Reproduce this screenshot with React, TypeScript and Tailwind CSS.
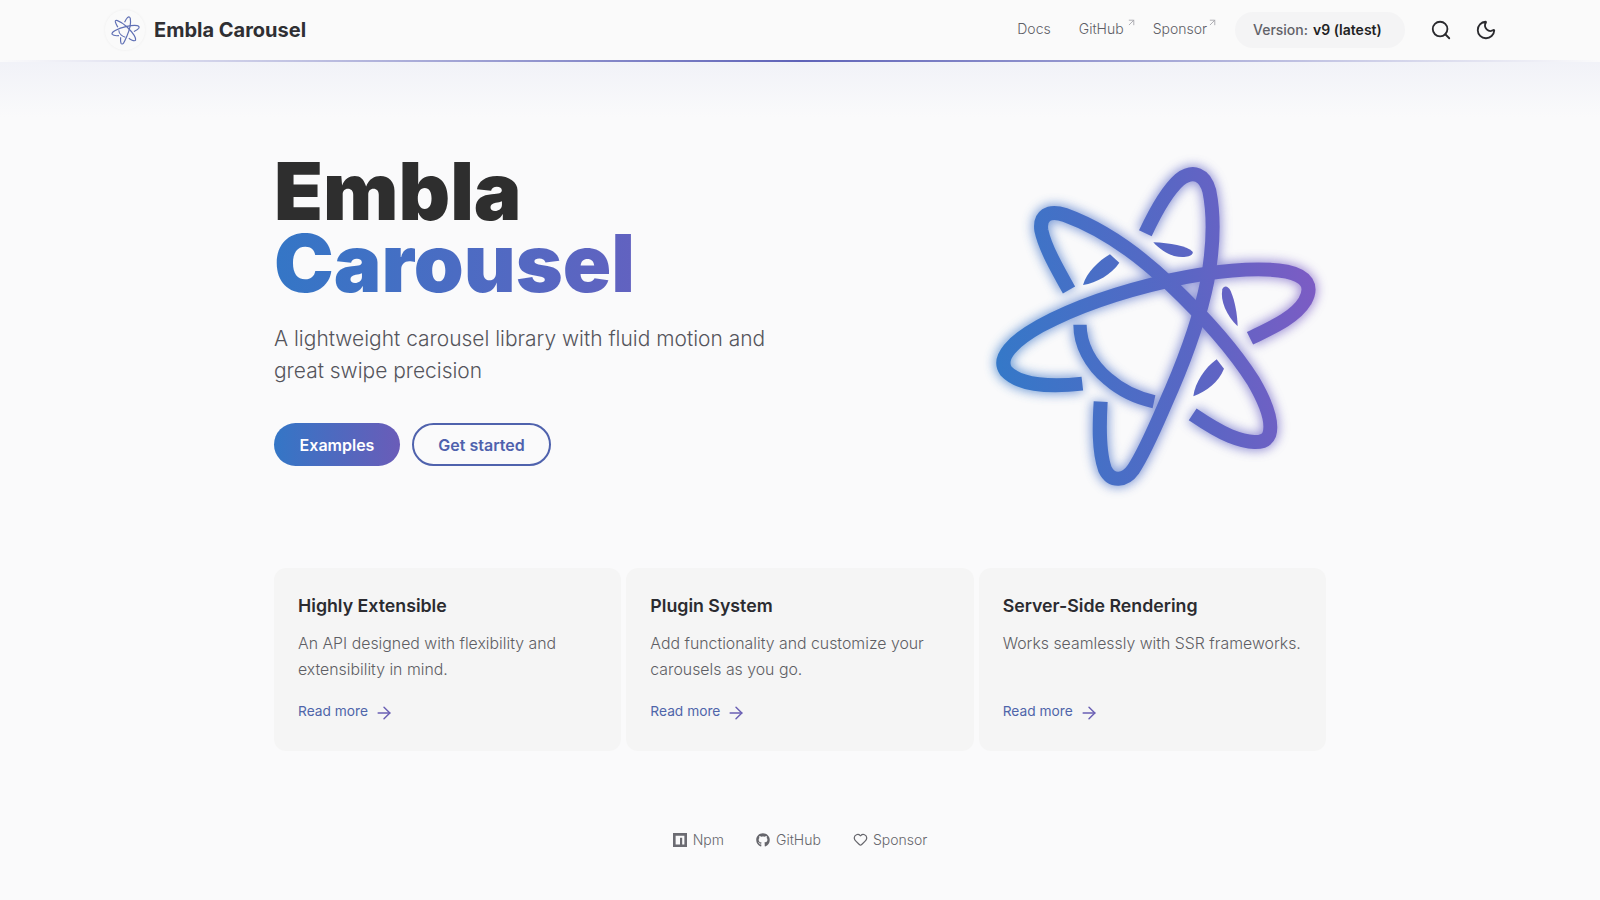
import React from "react";
import { ArrowRight, ArrowUpRight, Heart, Moon, Search } from "lucide-react";
import { FaGithub } from "react-icons/fa";

// strokes of the three orbits, drawn in a 1080 box
const orbits = [
  "M337 728 C250 738 150 735 108 690 C80 650 130 600 210 555 C330 490 480 445 600 418 C720 392 860 375 950 392 C1010 405 1030 435 1005 480 C975 530 905 560 840 592",
  "M297 447 C262 385 225 320 214 268 C208 225 235 205 285 222 C390 260 500 335 600 430 C700 525 790 625 850 720 C885 780 910 840 898 880 C885 915 830 905 780 885 C740 868 705 845 668 820",
  "M526 277 C555 215 590 150 630 115 C670 85 705 100 718 150 C735 235 730 320 712 420 C690 530 650 640 605 745 C565 835 530 925 490 985 C465 1020 425 1025 405 985 C385 930 388 850 392 782",
];
const inner = "M330 551 C330 610 360 670 415 715 C455 750 505 772 552 782";
const lenses = [
  "M550 304 C600 306 650 315 668 332 C672 347 640 352 612 345 C590 338 565 322 550 304 Z",
  "M339 432 C350 395 385 360 420 340 L448 365 C425 400 380 425 339 432 Z",
  "M803 556 C770 525 750 480 757 445 C762 432 775 435 782 450 C795 480 802 520 803 556 Z",
  "M670 766 C675 725 705 680 740 655 L762 683 C745 725 710 750 670 766 Z",
];

const Logo = ({ className }: { className?: string }) => (
  <svg viewBox="0 0 1080 1080" className={className} aria-hidden>
    <defs>
      <linearGradient id="logoGrad" gradientUnits="userSpaceOnUse" x1="80" y1="600" x2="1040" y2="480">
        <stop offset="0" stopColor="#3578c8" />
        <stop offset="0.6" stopColor="#5a66c4" />
        <stop offset="1" stopColor="#7c5cc4" />
      </linearGradient>
      <filter id="logoGlow" x="-20%" y="-20%" width="140%" height="140%">
        <feGaussianBlur stdDeviation="16" />
      </filter>
    </defs>
    <g filter="url(#logoGlow)" opacity="0.7">
      {orbits.map((d) => (
        <path key={d} d={d} fill="none" stroke="url(#logoGrad)" strokeWidth="52" />
      ))}
      <path d={inner} fill="none" stroke="url(#logoGrad)" strokeWidth="50" />
    </g>
    {orbits.map((d) => (
      <path key={d} d={d} fill="none" stroke="url(#logoGrad)" strokeWidth="42" />
    ))}
    <path d={inner} fill="none" stroke="url(#logoGrad)" strokeWidth="40" />
    {lenses.map((d) => (
      <path key={d} d={d} fill="url(#logoGrad)" />
    ))}
  </svg>
);

const MiniLogo = () => (
  <svg viewBox="0 0 1080 1080" className="h-[32px] w-[32px]" aria-hidden>
    {orbits.map((d) => (
      <path key={d} d={d} fill="none" stroke="#5f6fb4" strokeWidth="40" />
    ))}
    <path d={inner} fill="none" stroke="#5f6fb4" strokeWidth="36" />
  </svg>
);

const NpmIcon = () => (
  <svg viewBox="0 0 16 16" className="h-[14px] w-[14px]" aria-hidden>
    <path d="M0 0h16v16H0z M3 3v10h5V5.5h2.5V13H13V3z" fillRule="evenodd" fill="#6b6b72" />
  </svg>
);

const cards = [
  { title: "Highly Extensible", text: "An API designed with flexibility and extensibility in mind." },
  { title: "Plugin System", text: "Add functionality and customize your carousels as you go." },
  { title: "Server-Side Rendering", text: "Works seamlessly with SSR frameworks." },
];

export default function App() {
  return (
    <div className="min-h-[900px] overflow-hidden bg-[#fafafb] font-['Inter',sans-serif] text-[#2e2e33]">
      <header className="flex h-[60px] items-center justify-between bg-[#fafafa] pl-[105px] pr-[103px]">
        <a className="flex items-center gap-[9px]">
          <span className="flex h-[40px] w-[40px] items-center justify-center rounded-full shadow-[0_0_3px_rgba(0,0,0,0.06)]">
            <MiniLogo />
          </span>
          <span className="text-[20px] font-bold text-[#2f2f33]">Embla Carousel</span>
        </a>
        <nav className="flex items-center text-[14px] font-light text-[#5e5e66]">
          <a className="mr-[28px] pb-[3px]">Docs</a>
          <a className="relative mr-[17px] pb-[3px] pr-[12px]">
            GitHub
            <ArrowUpRight size={11} className="absolute right-[-1px] top-[-1px] text-[#a8a8ae]" />
          </a>
          <a className="relative mr-[19px] pb-[3px] pr-[9px]">
            Sponsor
            <ArrowUpRight size={11} className="absolute right-[-2px] top-[-1px] text-[#a8a8ae]" />
          </a>
          <div className="flex h-[36px] w-[170px] items-center gap-[5px] rounded-full bg-[#f4f4f5] pb-[2px] pl-[18px] font-medium">
            <span className="text-[#626268]">Version:</span>
            <span className="font-semibold text-[#1f1f23]">v9 (latest)</span>
          </div>
          <Search size={22} strokeWidth={2} className="ml-[25px] text-[#2a2a2e]" />
          <Moon size={22} strokeWidth={2} className="ml-[23px] text-[#2a2a2e]" />
        </nav>
      </header>

      <div className="h-[2px] bg-[linear-gradient(90deg,rgba(60,90,180,0)_0%,#5f63b8_50%,rgba(120,90,190,0)_100%)]" />
      <div className="h-[55px] bg-[linear-gradient(180deg,#f1f2f8,#fafafb)]" />

      <main className="mx-auto w-[1052px]">
        <section className="flex items-start justify-between">
          <div className="pt-[38px]">
            <h1 className="text-[80px] font-black leading-[72px] text-[#2e2e2e]">
              Embla
              <br />
              <span className="bg-[linear-gradient(90deg,#3476c6,#6262c0)] bg-clip-text text-transparent">Carousel</span>
            </h1>
            <p className="mt-[24px] w-[520px] text-[20.95px] font-light leading-[32px] text-[#55555c]">
              A lightweight carousel library with fluid motion and great swipe precision
            </p>
            <div className="mt-[36px] flex gap-[12px]">
              <a className="flex h-[43px] w-[126px] items-center justify-center rounded-full bg-[linear-gradient(90deg,#3476c6,#6a5cb8)] text-[16px] font-semibold text-white">
                Examples
              </a>
              <a className="flex h-[43px] w-[139px] items-center justify-center rounded-full border-2 border-[#4f62ad] text-[16px] font-semibold text-[#4f62ad]">
                Get started
              </a>
            </div>
          </div>
          <Logo className="mr-[-4px] mt-[24px] h-[360px] w-[360px] shrink-0" />
        </section>

        <section className="mt-[67px] grid grid-cols-3 gap-[5px]">
          {cards.map((c) => (
            <div key={c.title} className="h-[183px] rounded-[12px] bg-[#f5f5f5] px-[24px] pt-[24px]">
              <h2 className="text-[17.75px] font-semibold leading-[28px] text-[#2b2b30]">{c.title}</h2>
              <p className="mt-[11px] h-[52px] text-[15.85px] font-light leading-[26px] text-[#5e5e64]">{c.text}</p>
              <a className="mt-[16px] flex items-center gap-[6px] text-[13.75px] text-[#4f65aa]">
                Read more
                <ArrowRight size={20} strokeWidth={1.75} className="mt-[4px] text-[#6a5fb4]" />
              </a>
            </div>
          ))}
        </section>
      </main>

      <footer className="mt-[78px] flex items-center justify-center gap-[32px] text-[14px] font-light text-[#66666c]">
        <a className="flex items-center gap-[6px]"><NpmIcon />Npm</a>
        <a className="flex items-center gap-[6px]"><FaGithub size={14} />GitHub</a>
        <a className="flex items-center gap-[5px]"><Heart size={15} strokeWidth={2} />Sponsor</a>
      </footer>
    </div>
  );
}
